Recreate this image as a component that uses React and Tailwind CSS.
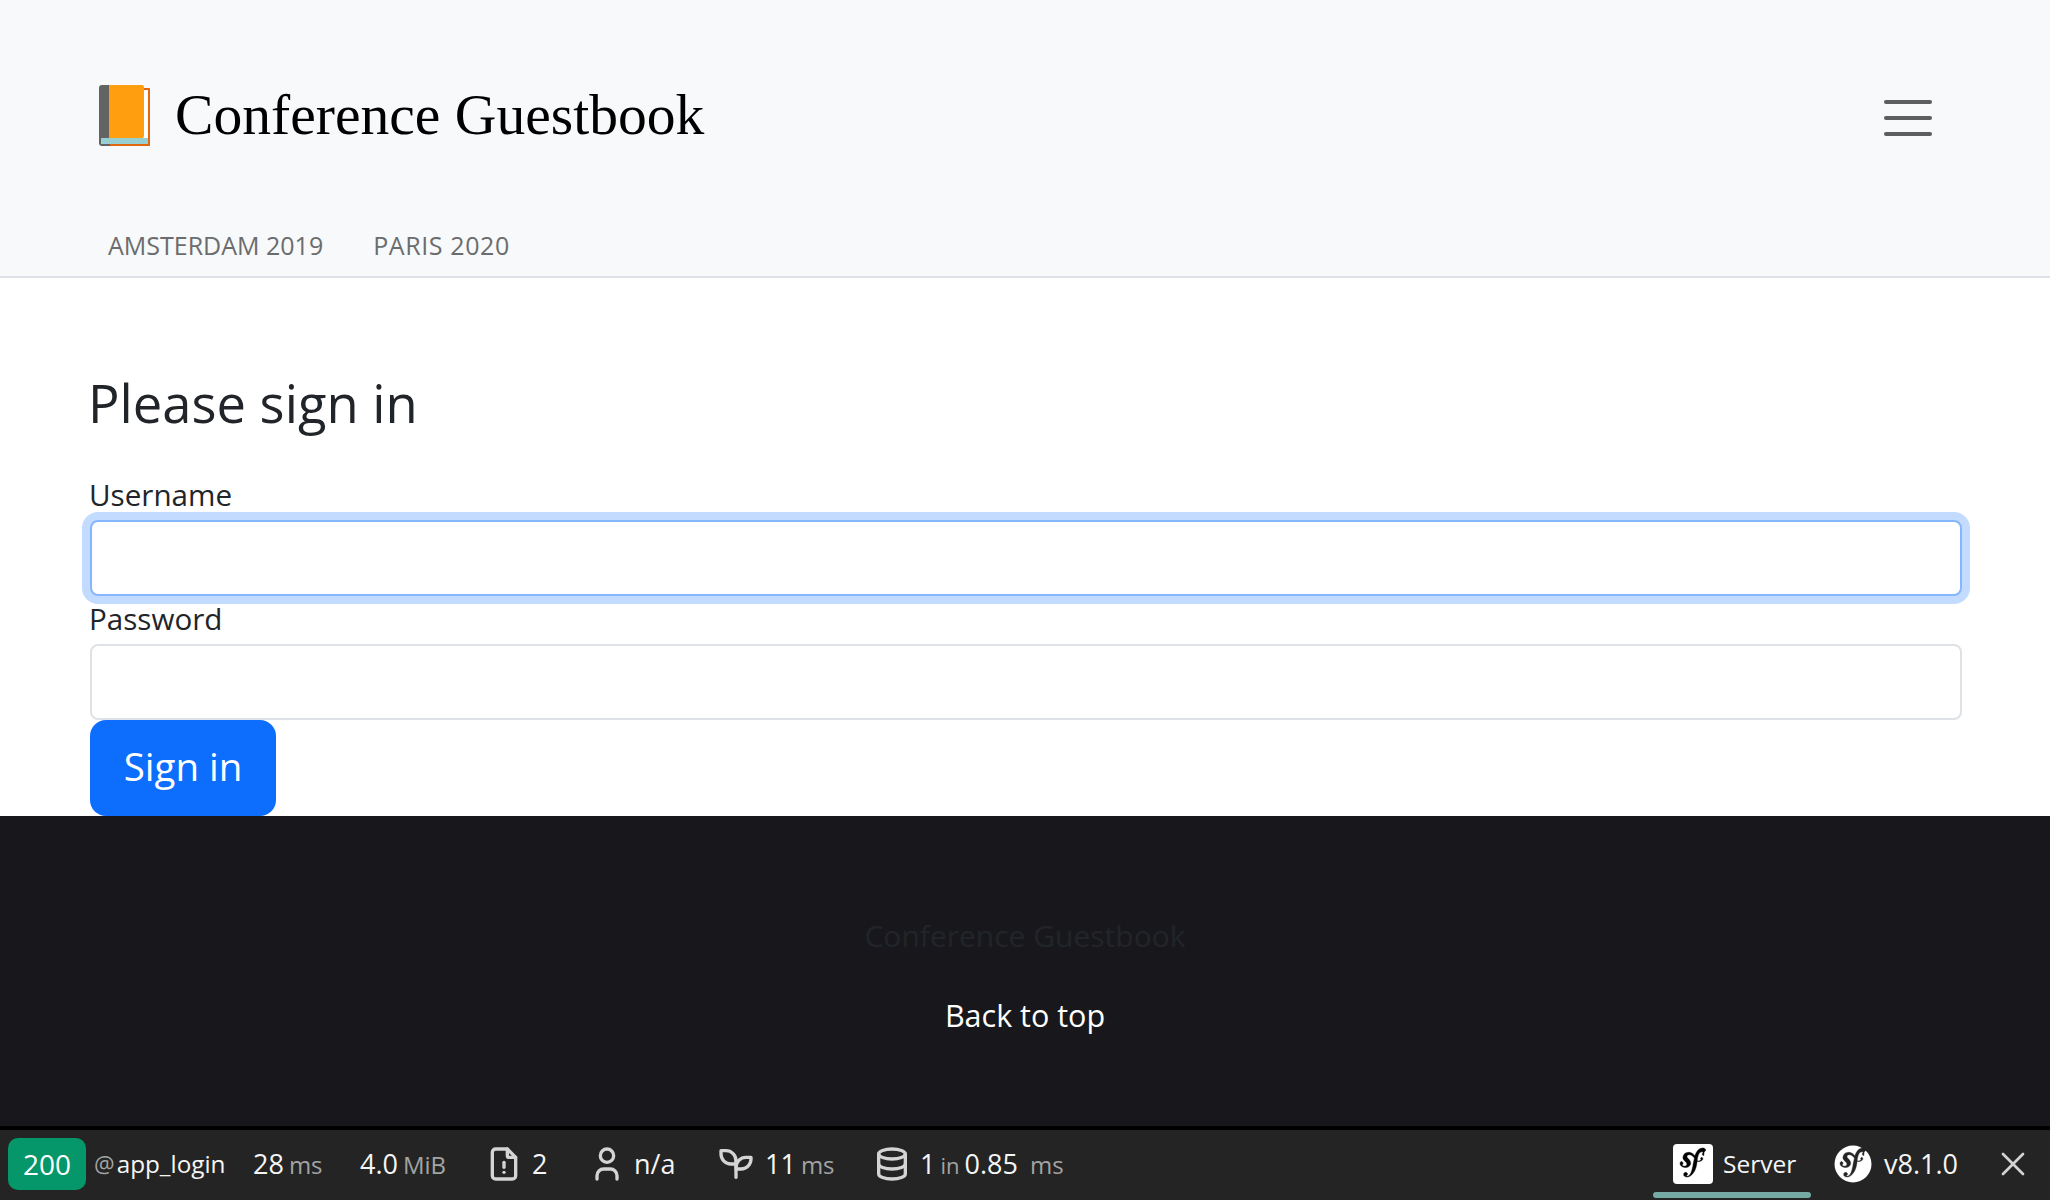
const sfGlyph =
  "M18.5 6.9c-.6 0-.9-.3-.9-.8 0-.2 0-.4.2-.6.1-.3.2-.3.2-.4 0-.3-.5-.4-.7-.4-1.8.1-2.3 2.5-2.7 4.4l-.2 1c1 .2 1.8 0 2.2-.3.6-.4-.2-.7-.1-1.2.1-.3.5-.5.7-.6.5 0 .7.5.7.9 0 .7-.9 1.7-2.7 1.6-.2 0-.4 0-.7-.1l-.3 1.9c-.3 1.6-.8 3.8-2.4 5.6-1.4 1.7-2.8 1.9-3.4 1.9-1.2 0-2-.6-2-1.5 0-.8.7-1.3 1.2-1.3.6 0 1.1.5 1.1 1 0 .5-.2.6-.4.7-.1.1-.3.2-.3.4 0 .1.1.3.4.3.5 0 .9-.3 1.2-.5 1.3-1 1.7-2.9 2.4-6.2l.1-.8c.2-1.1.5-2.3.8-3.5-.9-.7-1.4-1.6-2.6-1.9-.8-.2-1.3 0-1.7.4-.4.5-.2 1.1.2 1.5l.7.7c.8.9 1.2 1.7 1.1 2.7-.3 1.6-2.1 2.8-4.3 2.1-1.9-.6-2.2-1.9-2-2.7.2-.6.6-.8 1.1-.6.5.2.7.8.6 1.1 0 .1-.1.2-.2.4-.1.1-.2.2-.2.3-.1.4.4.7.8.8.9.3 1.7-.2 1.9-.9.2-.6-.2-1.1-.4-1.2l-1.3-1.4c-.6-.7-.8-1.6-.5-2.4.3-.9.9-1.7 1.8-2 .9-.4 1.9-.4 2.8-.1 1.2.4 1.8 1.2 2.5 1.8.4-1.2.9-2.3 1.7-3.2.7-.8 1.6-1.3 2.7-1.4 1.1 0 1.9.4 2 1.2 0 .3-.2 1-.9 1z";

function Icon({ children, className = "" }) {
  return (
    <svg
      viewBox="0 0 24 24"
      fill="none"
      stroke="#d4d4d4"
      strokeWidth="2"
      strokeLinecap="round"
      strokeLinejoin="round"
      className={`w-[40px] h-[40px] shrink-0 ${className}`}
    >
      {children}
    </svg>
  );
}

function BookEmoji() {
  return (
    <svg viewBox="0 0 51 61" className="w-[51px] h-[61px] shrink-0">
      <rect x="43" y="3" width="8" height="58" rx="1" fill="#e2670f" />
      <rect x="44" y="5" width="5" height="53" fill="#ffffff" />
      <path d="M3 0h8v61H3a3 3 0 0 1-3-3V3a3 3 0 0 1 3-3z" fill="#636363" />
      <rect x="2" y="53" width="47" height="6" fill="#98cfd3" />
      <rect x="11" y="59" width="40" height="2" fill="#e2670f" />
      <path d="M10 0h33a2 2 0 0 1 2 2v49a2 2 0 0 1-2 2H10z" fill="#ff9f10" />
    </svg>
  );
}

function Header() {
  return (
    <header className="bg-[#f8f9fa] border-b-2 border-[#dee2e6]">
      <div className="h-[230px] pl-[99px] pr-[118px] flex items-center justify-between">
        <a className="flex items-center gap-[25px] font-['Liberation_Serif',serif] text-[57.6px] leading-[68px] text-black">
          <BookEmoji />
          <span>Conference Guestbook</span>
        </a>
        <div className="w-[48px] mt-[6px] flex flex-col gap-[12px]">
          <div className="h-[4px] rounded-full bg-[#5e5e5e]" />
          <div className="h-[4px] rounded-full bg-[#5e5e5e]" />
          <div className="h-[4px] rounded-full bg-[#5e5e5e]" />
        </div>
      </div>
      <nav className="h-[46px] pl-[108px] flex gap-[50px] text-[25px] leading-[30px] text-[#6b6c6d]">
        <a>AMSTERDAM 2019</a>
        <a className="tracking-[0.6px]">PARIS 2020</a>
      </nav>
    </header>
  );
}

function SignInForm() {
  return (
    <main className="pl-[90px] pr-[88px] pt-[91px] text-[#212529]">
      <h1 className="text-[52.5px] leading-[68px] mb-[35px] -ml-[2px]">Please sign in</h1>
      <label className="block -ml-px text-[29.6px] leading-[46px] pb-[2px]">Username</label>
      <div className="h-[76px] rounded-[8px] border-2 border-[#86b7fe] bg-white shadow-[0_0_0_8px_#c2dbfe]" />
      <label className="block -ml-px text-[29.6px] leading-[46px] pb-[2px]">Password</label>
      <div className="h-[76px] rounded-[8px] border-2 border-[#dee2e6] bg-white" />
      <button className="block w-[186px] h-[96px] pb-[4px] rounded-[16px] bg-[#0d6efd] text-white text-[38.5px] leading-[60px]">
        Sign in
      </button>
    </main>
  );
}

function Footer() {
  return (
    <footer className="flex-1 bg-[#18181c] pt-[96px] text-center text-[30px] leading-[48px]">
      <p className="text-[#212529]">Conference Guestbook</p>
      <p className="mt-[31px] text-white text-[30.5px]">Back to top</p>
    </footer>
  );
}

function Measure({ value, unit }) {
  return (
    <span className="inline-flex items-baseline gap-[5px]">
      <span className="text-[27px]">{value}</span>
      <span className="text-[#a3a3a3] text-[24px]">{unit}</span>
    </span>
  );
}

function Toolbar() {
  return (
    <div className="h-[74px] pb-[2px] border-t-4 border-black bg-[#242424] flex items-center text-[24.5px] text-[#f5f5f5]">
      <span className="ml-[8px] w-[78px] h-[52px] rounded-[10px] bg-[#059669] text-white text-[28px] flex items-center justify-center">
        200
      </span>
      <span className="ml-[8px] w-[141px] text-[24.3px] leading-[30px]">
        <span className="mr-[2px] text-[#a3a3a3] text-[23px]">@</span>app_login
      </span>
      <span className="ml-[18px] w-[90px]">
        <Measure value="28" unit="ms" />
      </span>
      <span className="ml-[17px] w-[124px]">
        <Measure value="4.0" unit="MiB" />
      </span>
      <span className="w-[103px] flex items-center gap-[8px]">
        <Icon>
          <path d="M14 3v4a1 1 0 0 0 1 1h4" />
          <path d="M17 21h-10a2 2 0 0 1 -2 -2v-14a2 2 0 0 1 2 -2h7l5 5v11a2 2 0 0 1 -2 2z" />
          <path d="M12 17l.01 0" />
          <path d="M12 11l0 3" />
        </Icon>
        <span className="text-[27px]">2</span>
      </span>
      <span className="w-[129px] flex items-center gap-[7px]">
        <Icon>
          <path d="M8 7a4 4 0 1 0 8 0a4 4 0 0 0 -8 0" />
          <path d="M6 21v-2a4 4 0 0 1 4 -4h4a4 4 0 0 1 4 4v2" />
        </Icon>
        <span className="text-[27px]">n/a</span>
      </span>
      <span className="w-[156px] flex items-center gap-[9px]">
        <Icon>
          <path d="M12 10a6 6 0 0 0 -6 -6h-3v2a6 6 0 0 0 6 6h3" />
          <path d="M12 14a6 6 0 0 1 6 -6h3v1a6 6 0 0 1 -6 6h-3" />
          <path d="M12 20l0 -10" />
        </Icon>
        <Measure value="11" unit="ms" />
      </span>
      <span className="flex items-center gap-[8px]">
        <Icon>
          <path d="M4 6a8 3 0 1 0 16 0a8 3 0 1 0 -16 0" />
          <path d="M4 6v6a8 3 0 0 0 16 0v-6" />
          <path d="M4 12v6a8 3 0 0 0 16 0v-6" />
        </Icon>
        <span className="inline-flex items-baseline gap-[5px]">
          <span className="text-[27px]">1</span>
          <span className="text-[#a3a3a3] text-[22px]">in</span>
          <span className="text-[27px]">0.85</span>
          <span className="ml-[7px] text-[#a3a3a3] text-[24px]">ms</span>
        </span>
      </span>

      <span className="relative ml-auto self-stretch -mb-[2px] w-[158px] flex items-center pb-[2px] pl-[20px] gap-[10px]">
        <span className="w-[40px] h-[40px] rounded-[4px] bg-white flex items-center justify-center">
          <svg viewBox="0 0 24 24" className="w-[40px] h-[40px]">
            <path d={sfGlyph} fill="#000000" stroke="#000000" strokeWidth="0.25" />
          </svg>
        </span>
        Server
        <span className="absolute left-0 right-0 bottom-[2px] h-[6px] rounded-full bg-[#75aaa5]" />
      </span>
      <span className="ml-[22px] flex items-center gap-[11px]">
        <svg viewBox="0 0 24 24" className="w-[40px] h-[40px]">
          <circle cx="12" cy="12" r="11.1" fill="#ffffff" />
          <path d={sfGlyph} fill="#242424" stroke="#242424" strokeWidth="0.25" />
        </svg>
        <span className="text-[27px]">v8.1.0</span>
      </span>
      <span className="ml-[35px] mr-[17px]">
        <Icon className="block">
          <path d="M18 6l-12 12" strokeWidth="1.6" />
          <path d="M6 6l12 12" strokeWidth="1.6" />
        </Icon>
      </span>
    </div>
  );
}

export default function App() {
  return (
    <div className="w-[2050px] h-[1200px] flex flex-col overflow-hidden bg-white font-['Open_Sans','Liberation_Sans',sans-serif]">
      <Header />
      <SignInForm />
      <Footer />
      <Toolbar />
    </div>
  );
}
